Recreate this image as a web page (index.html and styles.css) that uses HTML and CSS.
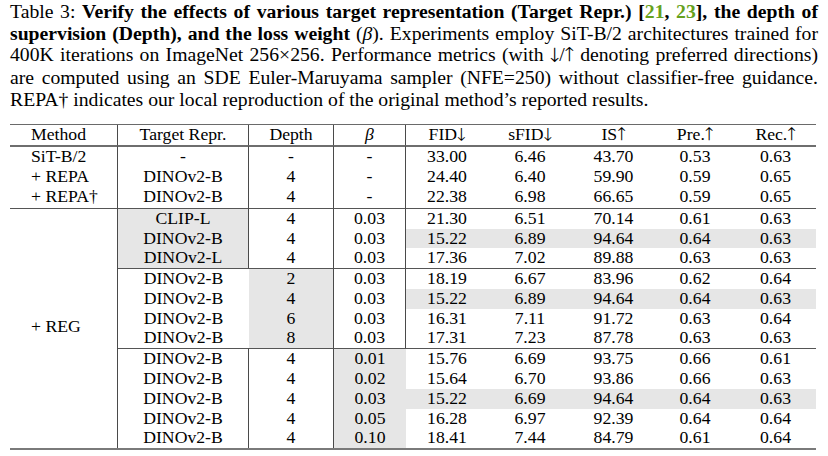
FILE: index.html
```html
<!DOCTYPE html>
<html>
<head>
<meta charset="utf-8">
<link rel="stylesheet" href="styles.css">
</head>
<body>
<div class="page">
  <div class="caption">
    <div class="ln">Table 3: <b>Verify the effects of various target representation (Target Repr.) [<span class="cite">21</span>, <span class="cite">23</span>], the depth of</b></div>
    <div class="ln"><b>supervision (Depth), and the loss weight</b> (<i>β</i>). Experiments employ SiT-B/2 architectures trained for</div>
    <div class="ln">400K iterations on ImageNet 256×256. Performance metrics (with <span class="arr">↓</span>/<span class="arr">↑</span> denoting preferred directions)</div>
    <div class="ln">are computed using an SDE Euler-Maruyama sampler (NFE=250) without classifier-free guidance.</div>
    <div class="ln last">REPA† indicates our local reproduction of the original method’s reported results.</div>
  </div>
  <table class="tbl">
    <colgroup>
      <col class="c-method"><col class="c-target"><col class="c-depth"><col class="c-beta">
      <col class="c-fid"><col class="c-sfid"><col class="c-is"><col class="c-pre"><col class="c-rec">
    </colgroup>
    <thead>
      <tr class="head">
        <th class="method vr">Method</th><th class="vr">Target Repr.</th><th class="vr">Depth</th><th class="vr"><i>β</i></th>
        <th>FID<span class="arr">↓</span></th><th>sFID<span class="arr">↓</span></th><th>IS<span class="arr">↑</span></th><th>Pre.<span class="arr">↑</span></th><th>Rec.<span class="arr">↑</span></th>
      </tr>
    </thead>
    <tbody>
      <tr class="first">
        <td class="method vr">SiT-B/2</td><td class="vr">-</td><td class="vr">-</td><td class="vr">-</td>
        <td>33.00</td><td>6.46</td><td>43.70</td><td>0.53</td><td>0.63</td>
      </tr>
      <tr>
        <td class="method vr">+ REPA</td><td class="vr">DINOv2-B</td><td class="vr">4</td><td class="vr">-</td>
        <td>24.40</td><td>6.40</td><td>59.90</td><td>0.59</td><td>0.65</td>
      </tr>
      <tr class="b1">
        <td class="method vr">+ REPA†</td><td class="vr">DINOv2-B</td><td class="vr">4</td><td class="vr">-</td>
        <td>22.38</td><td>6.98</td><td>66.65</td><td>0.59</td><td>0.65</td>
      </tr>

      <tr class="grp">
        <td class="method vr reg" rowspan="12">+ REG</td><td class="vr sh">CLIP-L</td><td class="vr">4</td><td class="vr">0.03</td>
        <td>21.30</td><td>6.51</td><td>70.14</td><td>0.61</td><td>0.63</td>
      </tr>
      <tr class="hl">
        <td class="vr sh">DINOv2-B</td><td class="vr">4</td><td class="vr">0.03</td>
        <td>15.22</td><td>6.89</td><td>94.64</td><td>0.64</td><td>0.63</td>
      </tr>
      <tr>
        <td class="vr sh">DINOv2-L</td><td class="vr">4</td><td class="vr">0.03</td>
        <td>17.36</td><td>7.02</td><td>89.88</td><td>0.63</td><td>0.63</td>
      </tr>

      <tr class="grp">
        <td>DINOv2-B</td><td class="vr sh">2</td><td class="vr">0.03</td>
        <td>18.19</td><td>6.67</td><td>83.96</td><td>0.62</td><td>0.64</td>
      </tr>
      <tr class="hl">
        <td>DINOv2-B</td><td class="vr sh">4</td><td class="vr">0.03</td>
        <td>15.22</td><td>6.89</td><td>94.64</td><td>0.64</td><td>0.63</td>
      </tr>
      <tr>
        <td>DINOv2-B</td><td class="vr sh">6</td><td class="vr">0.03</td>
        <td>16.31</td><td>7.11</td><td>91.72</td><td>0.63</td><td>0.64</td>
      </tr>
      <tr>
        <td>DINOv2-B</td><td class="vr sh">8</td><td class="vr">0.03</td>
        <td>17.31</td><td>7.23</td><td>87.78</td><td>0.63</td><td>0.63</td>
      </tr>

      <tr class="grp">
        <td class="vr">DINOv2-B</td><td class="vr">4</td><td class="sh">0.01</td>
        <td>15.76</td><td>6.69</td><td>93.75</td><td>0.66</td><td>0.61</td>
      </tr>
      <tr>
        <td class="vr">DINOv2-B</td><td class="vr">4</td><td class="sh">0.02</td>
        <td>15.64</td><td>6.70</td><td>93.86</td><td>0.66</td><td>0.63</td>
      </tr>
      <tr class="hl">
        <td class="vr">DINOv2-B</td><td class="vr">4</td><td class="sh">0.03</td>
        <td>15.22</td><td>6.69</td><td>94.64</td><td>0.64</td><td>0.63</td>
      </tr>
      <tr>
        <td class="vr">DINOv2-B</td><td class="vr">4</td><td class="sh">0.05</td>
        <td>16.28</td><td>6.97</td><td>92.39</td><td>0.64</td><td>0.64</td>
      </tr>
      <tr>
        <td class="vr">DINOv2-B</td><td class="vr">4</td><td class="sh">0.10</td>
        <td>18.41</td><td>7.44</td><td>84.79</td><td>0.61</td><td>0.64</td>
      </tr>
    </tbody>
  </table>
</div>
</body>
</html>
```

FILE: styles.css
```css
html, body {
  margin: 0;
  padding: 0;
  background: #ffffff;
}

body {
  color: #000000;
  font-family: "Liberation Serif", "Times New Roman", serif;
}

.page {
  width: 808px;
  padding: 1px 10px 0 10px;
}

.caption {
  font-size: 19.7px;
  line-height: 21.7px;
}

.caption .ln {
  text-align: justify;
  text-align-last: justify;
}

.caption .ln.last {
  text-align-last: left;
}

.caption .cite {
  color: #66a11c;
}

.arr {
  font-family: "FreeSerif", "Liberation Serif", serif;
}

.tbl {
  margin-top: 13px;
  width: 806px;
  table-layout: fixed;
  border-collapse: separate;
  border-spacing: 0;
  font-size: 17.7px;
  line-height: 19.8px;
  border-top: 1px solid #6a6a6a;
  border-bottom: 2px solid #7a7a7a;
}

.c-method { width: 108px; }
.c-target { width: 131px; }
.c-depth { width: 85px; }
.c-beta { width: 72px; }
.c-fid { width: 82px; }
.c-sfid { width: 84px; }
.c-is { width: 83px; }
.c-pre { width: 80px; }
.c-rec { width: 81px; }

.tbl th,
.tbl td {
  padding: 0;
  text-align: center;
  font-weight: normal;
  white-space: nowrap;
}

.tbl .method {
  text-align: left;
  padding-left: 21px;
}

.tbl .vr {
  border-right: 1px solid #4a4a4a;
}

.tbl .reg {
  vertical-align: middle;
  padding-bottom: 4px;
}

.tbl tr.grp td {
  border-top: 1px solid #555555;
}

.tbl tr.first td {
  border-top: 2px solid #6e6e6e;
}

.tbl tr.b1 td {
  padding-bottom: 1px;
}

.tbl .sh {
  background: #e6e6e6;
}

.tbl tr.hl td:nth-last-child(-n+5) {
  background: #e6e6e6;
}
```
